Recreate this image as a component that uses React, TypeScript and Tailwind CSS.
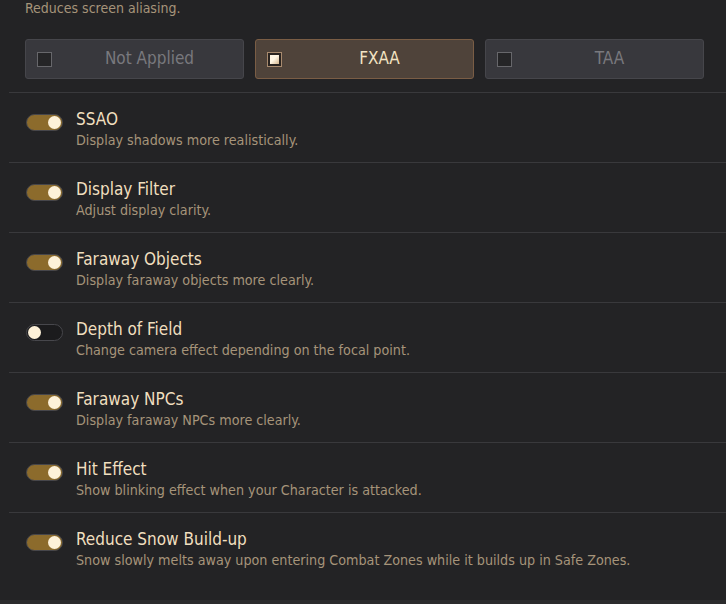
import { useState } from 'react';

type Option = {
  key: string;
  title: string;
  desc: string;
  on: boolean;
};

const initialOptions: Option[] = [
  { key: 'ssao', title: 'SSAO', desc: 'Display shadows more realistically.', on: true },
  { key: 'filter', title: 'Display Filter', desc: 'Adjust display clarity.', on: true },
  { key: 'objects', title: 'Faraway Objects', desc: 'Display faraway objects more clearly.', on: true },
  { key: 'dof', title: 'Depth of Field', desc: 'Change camera effect depending on the focal point.', on: false },
  { key: 'npcs', title: 'Faraway NPCs', desc: 'Display faraway NPCs more clearly.', on: true },
  { key: 'hit', title: 'Hit Effect', desc: 'Show blinking effect when your Character is attacked.', on: true },
  {
    key: 'snow',
    title: 'Reduce Snow Build-up',
    desc: 'Snow slowly melts away upon entering Combat Zones while it builds up in Safe Zones.',
    on: true,
  },
];

const modes = ['Not Applied', 'FXAA', 'TAA'];

function Toggle({ on, onClick }: { on: boolean; onClick: () => void }) {
  return (
    <button
      onClick={onClick}
      className={`relative h-[17px] w-[37px] shrink-0 rounded-full border ${
        on ? 'border-[#46464b] bg-[#8c6b2c]' : 'border-[#47474c] bg-[#1b1b1d]'
      }`}
    >
      <span
        className={`absolute top-[1px] h-[13px] w-[13px] rounded-full bg-[#fdf1d8] ${
          on ? 'right-[1px]' : 'left-[1px]'
        }`}
      />
    </button>
  );
}

export default function App() {
  const [mode, setMode] = useState('FXAA');
  const [options, setOptions] = useState(initialOptions);

  const toggle = (key: string) => {
    setOptions((prev) => prev.map((o) => (o.key === key ? { ...o, on: !o.on } : o)));
  };

  return (
    <div className="flex h-[604px] w-[726px] flex-col overflow-hidden bg-[#232325] font-['DejaVu_Sans_Condensed','DejaVu_Sans',sans-serif]">
      <div className="pl-[25px] pr-[22px]">
        <p className="-mt-[1px] text-[14px] leading-[18px] text-[#a6947a]">Reduces screen aliasing.</p>
        <div className="mt-[22px] grid grid-cols-3 gap-[11px]">
          {modes.map((m) => {
            const active = m === mode;
            return (
              <button
                key={m}
                onClick={() => setMode(m)}
                className={`relative flex h-[40px] items-center justify-center rounded-[3px] border pl-[30px] text-[17px] ${
                  active
                    ? 'border-[#7a5d45] bg-[#4f433a] text-[#f3e3c3]'
                    : 'border-[#46464b] bg-[#38383d] text-[#79797e]'
                }`}
              >
                <span
                  className={`absolute left-[11px] top-[12px] flex h-[15px] w-[15px] items-center justify-center border ${
                    active ? 'border-[#a88a6e] bg-[#2a2420]' : 'border-[#67676b] bg-[#252527]'
                  }`}
                >
                  {active && (
                    <span className="h-[9px] w-[9px] bg-[linear-gradient(135deg,#fff6e4_45%,#d4b48c_100%)]" />
                  )}
                </span>
                {m}
              </button>
            );
          })}
        </div>
      </div>
      <div className="mt-[13px] ml-[9px] flex-1 border-t border-[#39393c]">
        {options.map((o, i) => (
          <div
            key={o.key}
            className={`flex h-[70px] items-start gap-[13px] pl-[17px] pt-[18px] ${
              i < options.length - 1 ? 'border-b border-[#39393c]' : ''
            }`}
          >
            <div className="mt-[2px]">
              <Toggle on={o.on} onClick={() => toggle(o.key)} />
            </div>
            <div className="-mt-[2px]">
              <div className="text-[17px] leading-[20px] text-[#f0dfbf]">{o.title}</div>
              <div className="mt-[2px] text-[14.2px] leading-[18px] text-[#a6947a]">{o.desc}</div>
            </div>
          </div>
        ))}
      </div>
      <div className="h-[4px] bg-[#2b2b2d]" />
    </div>
  );
}
